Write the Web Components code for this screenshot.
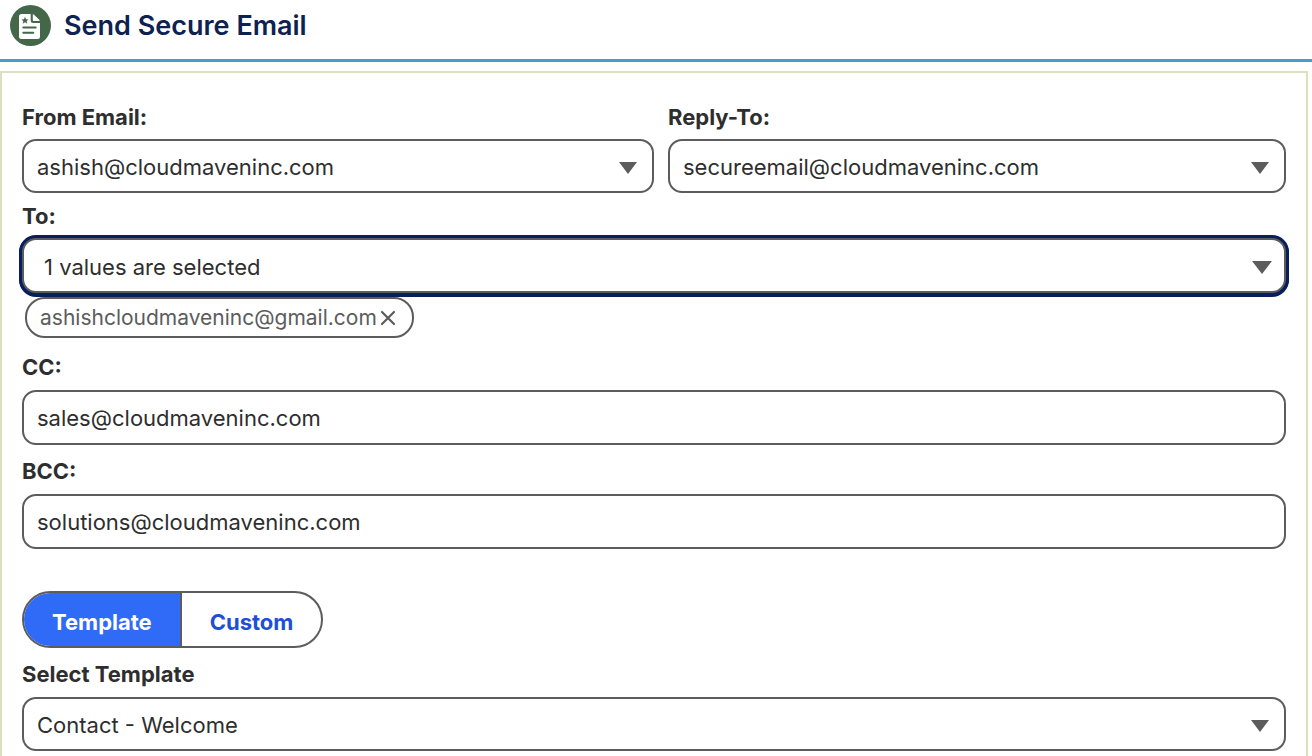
<!DOCTYPE html>
<html lang="en">
<head>
<meta charset="utf-8">
<meta name="viewport" content="width=device-width, initial-scale=1">
<title>Send Secure Email</title>
<style>
  body {
    margin: 0;
    background: #fff;
    color: #2e2e2e;
    font-family: Inter, "Liberation Sans", sans-serif;
    font-size: 22px;
    --line: #5c5c5c;
    --navy: #081f5c;
  }
</style>
</head>
<body>
<secure-email-page></secure-email-page>

<template id="page-header">
  <style>
    :host { display: block; border-bottom: 3px solid #4a9ad6; }
    header { display: flex; align-items: center; gap: 13px; padding: 0 10px 8px; height: 51px; }
    svg { display: block; flex: none; }
    h1 { margin: 0; font-size: 27px; line-height: 32px; font-weight: 600; color: #0d2250; }
  </style>
  <header>
    <svg width="41" height="41" viewBox="0 0 41 41" aria-hidden="true">
      <circle cx="20.500" cy="20.500" r="20.500" fill="#446649"/>
      <path fill="#fff" d="M11.500 9H20.700V15.500Q20.700 18 23.200 18H30V31.500Q30 34 27.500 34H11.500Q9 34 9 31.500V11.500Q9 9 11.500 9Z"/>
      <path fill="#fff" d="M22.800 9.300Q23.300 9 23.800 9.500L29.500 15Q29.900 15.600 29.300 16H23.800Q22.800 16 22.800 15Z"/>
      <path fill="#446649" d="M15 11.800L16 14.300L18.500 14.500L16.600 16.200L17.200 18.700L15 17.300L12.800 18.700L13.400 16.200L11.500 14.500L14 14.300Z"/>
      <path stroke="#446649" stroke-width="2" stroke-linecap="round" d="M13.300 22.500H25.700M13.300 27.800H23.300"/>
    </svg>
    <h1><slot></slot></h1>
  </header>
</template>

<template id="text-field">
  <style>
    :host { display: block; padding-top: 12px; }
    label { display: block; font-weight: 700; line-height: 28px; margin-bottom: 9px; }
    input {
      display: block; box-sizing: border-box; width: 100%; margin: 0;
      padding: 12px 13px 11px; border: 2px solid var(--line); border-radius: 14px;
      background: #fff; color: inherit; font: inherit; line-height: 28px; height: 55px; outline: none;
    }
    input:focus-visible { box-shadow: 0 0 0 3px var(--navy); }
  </style>
  <label for="control"></label>
  <input id="control" type="text">
</template>

<template id="select-field">
  <style>
    :host { display: block; padding-top: 12px; }
    :host([compact]) { padding-top: 9px; }
    label { display: block; font-weight: 700; line-height: 28px; margin-bottom: 9px; }
    :host([compact]) label { margin-bottom: 8px; }
    .box { display: grid; align-items: center; }
    select, svg { grid-area: 1 / 1; }
    select {
      appearance: none; box-sizing: border-box; width: 100%; margin: 0; height: 54px;
      padding: 1px 50px 0 13px; border: 2px solid var(--line); border-radius: 14px;
      background: #fff; color: inherit; font: inherit; outline: none;
    }
    svg { justify-self: end; width: 18px; height: 12px; margin-right: 17px; margin-top: 4px; fill: var(--line); pointer-events: none; }
    :host([active]) select {
      height: 55px; padding-top: 3px; padding-left: 20px;
      box-shadow: 0 0 0 3px var(--navy), 0 1px 0 3px var(--navy);
    }
    :host([active]) svg { width: 20px; height: 13px; margin-right: 14px; }
  </style>
  <label for="control"></label>
  <div class="box">
    <select id="control"></select>
    <svg viewBox="0 0 18 12" preserveAspectRatio="none" aria-hidden="true"><path d="M0 0H18L9 12Z"/></svg>
  </div>
</template>

<template id="recipient-chip">
  <style>
    :host {
      display: inline-flex; align-items: center; gap: 2px; box-sizing: border-box; height: 41px;
      padding: 0 15px 0 13px; border: 2px solid var(--line); border-radius: 20px;
      color: var(--line); font-size: 21px; line-height: 24px;
    }
    button { display: flex; padding: 0; margin: 0; border: 0; background: none; color: inherit; cursor: pointer; }
    svg { display: block; stroke: currentColor; stroke-width: 2.200; stroke-linecap: round; }
  </style>
  <span><slot></slot></span>
  <button type="button" aria-label="Remove"><svg width="18" height="18" viewBox="0 0 18 18" aria-hidden="true"><path d="M3 3L15 15M15 3L3 15"/></svg></button>
</template>

<template id="mode-toggle">
  <style>
    :host { display: block; }
    div {
      display: inline-flex; vertical-align: top; box-sizing: border-box; height: 57px; overflow: hidden;
      border: 2px solid var(--line); border-radius: 29px; background: #fff;
    }
    button {
      margin: 0; padding: 4px 28px 0; border: 0; background: none; color: #1d4fd7;
      font: inherit; font-weight: 700; cursor: pointer;
    }
    button + button { border-left: 2px solid var(--line); }
    button[aria-pressed="true"] { background: #2f6bf6; color: #fff; }
  </style>
  <div role="group" aria-label="Message type">
    <button type="button" aria-pressed="true">Template</button>
    <button type="button" aria-pressed="false">Custom</button>
  </div>
</template>

<template id="secure-email-page">
  <style>
    :host { display: block; }
    form {
      margin: 9px 4px 0 0; padding: 21px 20px 24px;
      border: 2px solid #dbe0bf;
    }
    .pair { display: grid; grid-template-columns: 1fr 1fr; }
    .pair > :last-child { padding-left: 14px; }
    .chips { display: flex; padding: 4px 3px 3px; }
    mode-toggle { margin-top: 42px; }
  </style>
  <page-header>Send Secure Email</page-header>
  <form>
    <div class="pair">
      <select-field compact label="From Email:" value="ashish@cloudmaveninc.com"></select-field>
      <select-field compact label="Reply-To:" value="secureemail@cloudmaveninc.com"></select-field>
    </div>
    <select-field compact active label="To:" value="1 values are selected"></select-field>
    <div class="chips"><recipient-chip>ashishcloudmaveninc@gmail.com</recipient-chip></div>
    <text-field label="CC:" value="sales@cloudmaveninc.com"></text-field>
    <text-field label="BCC:" value="solutions@cloudmaveninc.com"></text-field>
    <mode-toggle></mode-toggle>
    <select-field label="Select Template" value="Contact - Welcome"></select-field>
  </form>
</template>

<script>
  class TemplateElement extends HTMLElement {
    constructor() {
      super();
      const template = document.getElementById(this.localName);
      this.attachShadow({ mode: "open" }).append(template.content.cloneNode(true));
    }
  }

  class PageHeader extends TemplateElement {}

  class TextField extends TemplateElement {
    connectedCallback() {
      this.shadowRoot.querySelector("label").textContent = this.getAttribute("label");
      this.shadowRoot.querySelector("input").value = this.getAttribute("value");
    }
  }

  class SelectField extends TemplateElement {
    connectedCallback() {
      this.shadowRoot.querySelector("label").textContent = this.getAttribute("label");
      this.shadowRoot.querySelector("select").replaceChildren(new Option(this.getAttribute("value")));
    }
  }

  class RecipientChip extends TemplateElement {
    connectedCallback() {
      this.shadowRoot.querySelector("button").onclick = () => this.remove();
    }
  }

  class ModeToggle extends TemplateElement {
    connectedCallback() {
      const buttons = this.shadowRoot.querySelectorAll("button");
      buttons.forEach(button => {
        button.onclick = () => buttons.forEach(b => b.setAttribute("aria-pressed", String(b === button)));
      });
    }
  }

  class SecureEmailPage extends TemplateElement {}

  customElements.define("page-header", PageHeader);
  customElements.define("text-field", TextField);
  customElements.define("select-field", SelectField);
  customElements.define("recipient-chip", RecipientChip);
  customElements.define("mode-toggle", ModeToggle);
  customElements.define("secure-email-page", SecureEmailPage);
</script>
</body>
</html>
